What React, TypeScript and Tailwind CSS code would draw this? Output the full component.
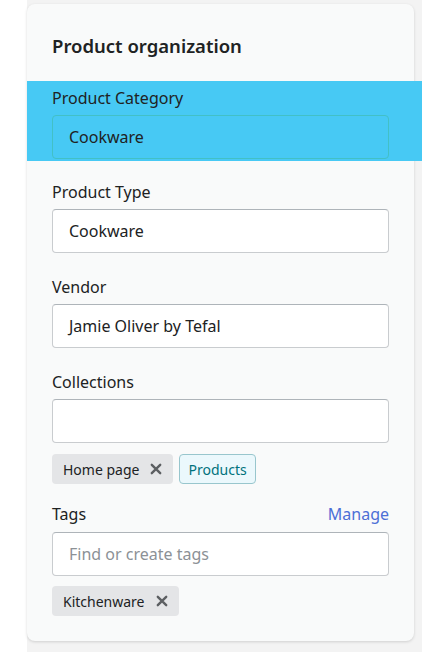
import React from 'react';

const font = { fontFamily: '"Noto Sans", "Open Sans", sans-serif' };

const X = () => (
  <svg viewBox="0 0 20 20" className="w-[14px] h-[14px]" fill="none" stroke="#5c5f62" strokeWidth="3.4" strokeLinecap="round">
    <path d="M4 4l12 12M16 4L4 16" />
  </svg>
);

const Field = ({ label, value, placeholder }: { label: string; value?: string; placeholder?: string }) => (
  <div className="flex flex-col gap-[5px]">
    <label className="text-[16px] leading-[24px] text-[#202223]">{label}</label>
    <div className="h-[44px] rounded-[4px] border border-[#c9cccf] border-t-[#aeb4b9] bg-white px-4 flex items-center text-[16px] text-[#202223]">
      {value ? value : <span className="text-[#8c9196]">{placeholder}</span>}
    </div>
  </div>
);

const Tag = ({ text }: { text: string }) => (
  <span className="inline-flex items-center gap-[10px] h-[30px] pl-[11px] pr-[10px] rounded-[4px] bg-[#e4e5e7] text-[14px] text-[#202223]">
    {text}
    <X />
  </span>
);

export default function App() {
  return (
    <div className="h-[652px] bg-white flex" style={font}>
      <div className="ml-[27px] w-[395px] h-full bg-[#f3f3f3] pt-[4px] pr-[8px]">
        <div className="rounded-lg bg-[#f9fafa] shadow-[0_1px_3px_rgba(0,0,0,0.15)] px-[25px] pt-[28px] pb-[25px]">
          <h2 className="text-[18.5px] leading-[27px] font-semibold text-[#202223]">Product organization</h2>

          <div className="relative mt-[27px]">
            {/* highlight overlay */}
            <div className="absolute -left-[25px] -right-[33px] -top-[5px] -bottom-[2px] bg-[#47c9f4]" />
            <div className="relative flex flex-col gap-[5px]">
              <label className="text-[16px] leading-[24px] text-[#202223]">Product Category</label>
              <div className="h-[44px] rounded-[4px] border border-[#42c0c6] px-4 flex items-center text-[16px] text-[#202223]">
                Cookware
              </div>
            </div>
          </div>

          <div className="flex flex-col gap-[22px] mt-[21px]">
            <Field label="Product Type" value="Cookware" />
            <Field label="Vendor" value="Jamie Oliver by Tefal" />
            <div>
              <Field label="Collections" value="" />
              <div className="flex gap-[6px] mt-[11px]">
                <Tag text="Home page" />
                <span className="inline-flex items-center h-[30px] px-[8px] rounded-[4px] bg-[#ebf8fc] border border-[#98c6cd] text-[14px] text-[#00727c]">
                  Products
                </span>
              </div>
            </div>
          </div>

          <div className="mt-[18px] flex flex-col gap-[6px]">
            <div className="flex justify-between text-[16px] leading-[24px]">
              <span className="text-[#202223]">Tags</span>
              <span className="text-[#4c6fd6]">Manage</span>
            </div>
            <div className="h-[44px] rounded-[4px] border border-[#c9cccf] border-t-[#aeb4b9] bg-white px-4 flex items-center text-[16px] text-[#8c9196]">
              Find or create tags
            </div>
          </div>
          <div className="flex mt-[10px]">
            <Tag text="Kitchenware" />
          </div>
        </div>
      </div>
    </div>
  );
}
